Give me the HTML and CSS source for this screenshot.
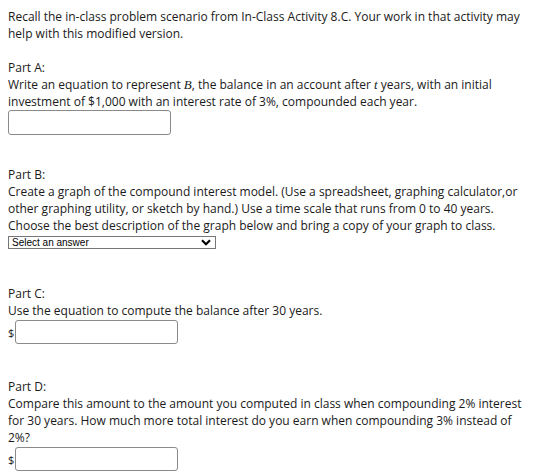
FILE: index.html
```html
<!DOCTYPE html>
<html>
<head>
<meta charset="utf-8">
<link rel="stylesheet" href="styles.css">
</head>
<body>
<div class="page">
  <p class="intro">Recall the in-class problem scenario from In-Class Activity 8.C. Your work in that activity may help with this modified version.</p>

  <section class="part part-a">
    <div class="label">Part A:</div>
    <div class="q">Write an equation to represent <i class="var">B</i>, the balance in an account after <i class="var">t</i> years, with an initial investment of $1,000 with an interest rate of 3%, compounded each year.</div>
    <div class="field"><span class="box wide"></span></div>
  </section>

  <section class="part part-b">
    <div class="label">Part B:</div>
    <div class="q">Create a graph of the compound interest model. (Use a spreadsheet, graphing calculator,or other graphing utility, or sketch by hand.) Use a time scale that runs from 0 to 40 years. Choose the best description of the graph below and bring a copy of your graph to class.</div>
    <div class="select">
      <span class="select-text">Select an answer</span>
      <svg class="chev" width="10" height="7" viewBox="0 0 10 7"><path d="M1 1.2 L5 5.2 L9 1.2" fill="none" stroke="#000" stroke-width="2.2"/></svg>
    </div>
  </section>

  <section class="part part-c">
    <div class="label">Part C:</div>
    <div class="q">Use the equation to compute the balance after 30 years.</div>
    <div class="field"><span class="dollar">$</span><span class="box"></span></div>
  </section>

  <section class="part part-d">
    <div class="label">Part D:</div>
    <div class="q">Compare this amount to the amount you computed in class when compounding 2% interest for 30 years. How much more total interest do you earn when compounding 3% instead of 2%?</div>
    <div class="field"><span class="dollar">$</span><span class="box"></span></div>
  </section>
</div>
</body>
</html>
```

FILE: styles.css
```css
html, body {
  margin: 0;
  padding: 0;
  background: #fff;
}
body {
  padding: 8px;
  font-family: "Open Sans", "DejaVu Sans", sans-serif;
  font-size: 12px;
  line-height: 17px;
  color: #1a1a1a;
}
.page {
  width: 520px;
}
.intro {
  margin: 0 0 17px 0;
}
.part {
  display: flex;
  flex-direction: column;
}
.part-b { margin-top: 31px; }
.part-c { margin-top: 36px; }
.part-d { margin-top: 34px; }
.var {
  font-family: "Liberation Serif", serif;
  font-style: italic;
  font-size: 13px;
  line-height: 0;
}
.field {
  display: flex;
  align-items: center;
}
.box {
  display: block;
  width: 161px;
  height: 22px;
  border: 1px solid #8a8a8a;
  border-radius: 3px;
  background: #fff;
}
.box.wide {
  height: 23px;
}
.dollar {
  width: 7px;
  font-size: 11px;
}
.part-c .field, .part-d .field {
  margin-top: 1px;
}
.select {
  margin-top: 2px;
  height: 11px;
  width: 199px;
  border: 1px solid #767676;
  display: flex;
  align-items: center;
  justify-content: space-between;
  padding: 0 4px 0 3px;
  font-family: "Liberation Sans", Arial, sans-serif;
  font-size: 10px;
  line-height: 11px;
  color: #000;
}
.chev {
  display: block;
}
```
